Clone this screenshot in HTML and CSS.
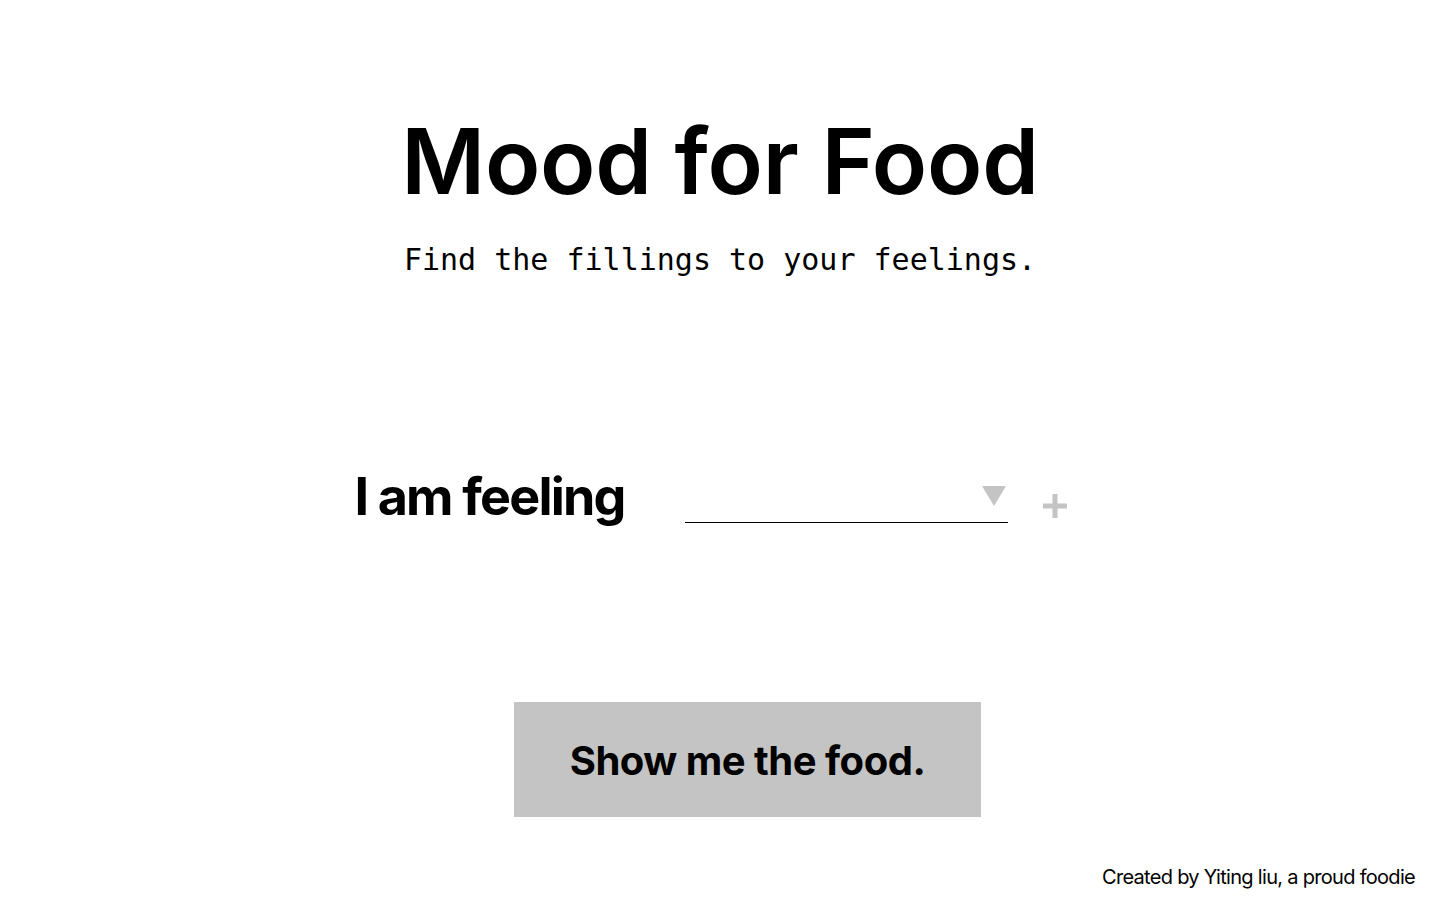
FILE: index.html
```html
<!DOCTYPE html>
<html lang="en">
<head>
<meta charset="utf-8">
<title>Mood for Food</title>
<link rel="stylesheet" href="styles.css">
</head>
<body>
<main class="page">
  <h1 class="title">Mood for Food</h1>
  <p class="tagline">Find the fillings to your feelings.</p>

  <div class="mood-row">
    <span class="mood-label">I am feeling</span>
    <div class="mood-select">
      <svg class="caret" width="24" height="20" viewBox="0 0 24 20" aria-hidden="true">
        <polygon points="0,0 24,0 12,20" fill="#c4c4c4"/>
      </svg>
    </div>
    <svg class="plus" width="24" height="24" viewBox="0 0 24 24" aria-hidden="true">
      <rect x="9.5" y="0" width="5" height="24" fill="#c4c4c4"/>
      <rect x="0" y="9.5" width="24" height="5" fill="#c4c4c4"/>
    </svg>
  </div>

  <button class="show-btn" type="button">Show me the food.</button>

  <footer class="credit">Created by Yiting liu, a proud foodie</footer>
</main>
</body>
</html>
```

FILE: styles.css
```css
* {
  box-sizing: border-box;
}

html, body {
  margin: 0;
  padding: 0;
  background: #ffffff;
}

body {
  font-family: Inter, "Noto Sans", sans-serif;
  color: #000000;
}

.page {
  width: 1440px;
  height: 900px;
  display: flex;
  flex-direction: column;
  align-items: center;
}

.title {
  margin: 116px 0 0;
  font-size: 91px;
  line-height: 1;
  font-weight: 600;
  letter-spacing: -0.2px;
}

.tagline {
  margin: 38px 0 0;
  font-family: "DejaVu Sans Mono", "Liberation Mono", monospace;
  font-size: 30px;
  line-height: 1;
  font-weight: 400;
}

.mood-row {
  margin-top: 196px;
  margin-right: 19px;
  display: flex;
  align-items: flex-end;
}

.mood-label {
  font-size: 52px;
  font-weight: 700;
  line-height: 1;
  letter-spacing: -1.8px;
}

.mood-select {
  margin-left: 60px;
  width: 323px;
  height: 40px;
  border-bottom: 1.5px solid #000000;
  display: flex;
  justify-content: flex-end;
  align-items: flex-start;
  padding: 3px 2px 0 0;
}

.caret {
  display: block;
}

.plus {
  display: block;
  margin-left: 35px;
  margin-bottom: 5px;
}

.show-btn {
  margin-top: 179px;
  margin-left: 55px;
  width: 467px;
  height: 115px;
  border: none;
  background: #c4c4c4;
  font-family: Inter, "Noto Sans", sans-serif;
  font-size: 40px;
  font-weight: 700;
  color: #000000;
  letter-spacing: -0.5px;
  padding: 2px 0 0;
}

.credit {
  align-self: flex-end;
  margin-top: 50px;
  margin-right: 25px;
  font-size: 20px;
  font-weight: 400;
  letter-spacing: -0.7px;
  line-height: 1;
}
```
